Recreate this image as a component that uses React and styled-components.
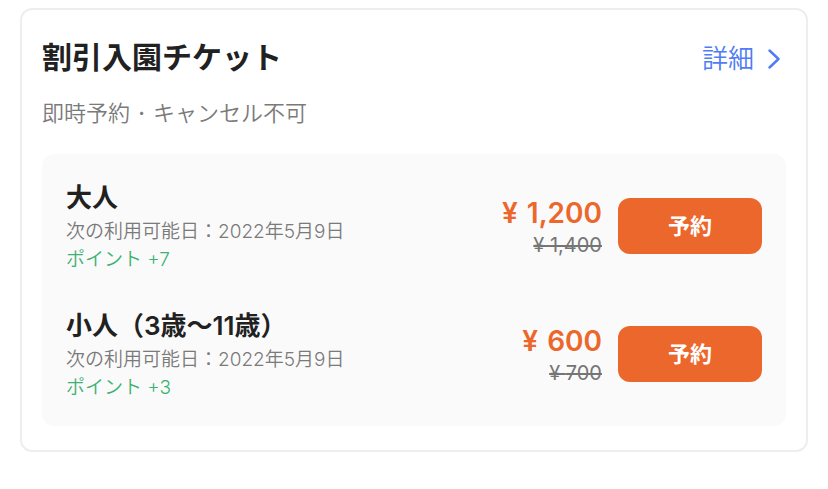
import React from "react";
import styled, { createGlobalStyle } from "styled-components";

const GlobalStyle = createGlobalStyle`
  * { box-sizing: border-box; }
  body {
    margin: 0;
    background: #fff;
    color: #212121;
    font-family: Inter, "Noto Sans CJK JP", sans-serif;
  }
  h2, h3, p, ul { margin: 0; padding: 0; }
`;

const Page = styled.main`
  padding: 8px 20px 36px;
`;

const Card = styled.section`
  padding: 24px 20px;
  border: 2px solid #eee;
  border-radius: 12px;
`;

const CardHeader = styled.header`
  display: flex;
  align-items: flex-start;
  justify-content: space-between;
`;

const Title = styled.h2`
  font-size: 30px;
  line-height: 46px;
  font-weight: 600;
`;

const DetailLink = styled.a`
  display: flex;
  align-items: center;
  gap: 8px;
  color: #4f7df5;
  font-size: 26px;
  line-height: 50px;
  font-weight: 350;
  text-decoration: none;
`;

const Policy = styled.p`
  margin-top: 12px;
  color: #7a7a7a;
  font-size: 22px;
  line-height: 34px;
  font-weight: 350;
`;

const Separator = styled.span`
  margin: 0 2px;
  font-weight: 500;
`;

const TicketList = styled.ul`
  display: grid;
  gap: 32px;
  margin-top: 24px;
  padding: 24px;
  border-radius: 12px;
  background: #fafafa;
  list-style: none;
`;

const Ticket = styled.li`
  display: flex;
  align-items: center;
  gap: 16px;
`;

const Info = styled.div`
  flex: 1;
`;

const TicketName = styled.h3`
  font-size: 26px;
  line-height: 40px;
  font-weight: 600;
`;

const Note = styled.p`
  color: ${({ $tone }) => ($tone === "points" ? "#3bb273" : "#7a7a7a")};
  font-size: 19px;
  line-height: 28px;
  font-weight: 350;
`;

const Prices = styled.div`
  display: grid;
  justify-items: end;
  padding-top: 2px;
`;

const Price = styled.strong`
  color: #ec672c;
  font-size: 28px;
  line-height: 36px;
  font-weight: 600;
`;

const Currency = styled.span`
  margin-right: 2px;
`;

const OldPrice = styled.s`
  color: #757575;
  font-size: 20px;
  line-height: 28px;
  font-weight: 400;
`;

const BookButton = styled.button`
  width: 144px;
  height: 56px;
  padding: 0;
  border: 0;
  border-radius: 12px;
  background: #ec672c;
  color: #fff;
  font: 600 22px/32px Inter, "Noto Sans CJK JP", sans-serif;
  cursor: pointer;
`;

const tickets = [
  { name: "大人", points: "+7", price: "1,200", oldPrice: "1,400" },
  { name: "小人（3歳〜11歳）", points: "+3", price: "600", oldPrice: "700" },
];

export default function App() {
  return (
    <>
      <GlobalStyle />
      <Page lang="ja">
        <Card>
          <CardHeader>
            <Title>割引入園チケット</Title>
            <DetailLink href="#details">
              詳細
              <svg width="24" height="24" viewBox="0 0 24 24" fill="none" stroke="currentColor" strokeWidth="2.5" strokeLinecap="round" strokeLinejoin="round" aria-hidden="true">
                <path d="M7.5 3.5l9 8.5-9 8.5" />
              </svg>
            </DetailLink>
          </CardHeader>
          <Policy>即時予約 <Separator>·</Separator> キャンセル不可</Policy>
          <TicketList>
            {tickets.map((t) => (
              <Ticket key={t.name}>
                <Info>
                  <TicketName>{t.name}</TicketName>
                  <Note>次の利用可能日：2022年5月9日</Note>
                  <Note $tone="points">ポイント {t.points}</Note>
                </Info>
                <Prices>
                  <Price><Currency>¥</Currency> {t.price}</Price>
                  <OldPrice>¥ {t.oldPrice}</OldPrice>
                </Prices>
                <BookButton type="button">予約</BookButton>
              </Ticket>
            ))}
          </TicketList>
        </Card>
      </Page>
    </>
  );
}
